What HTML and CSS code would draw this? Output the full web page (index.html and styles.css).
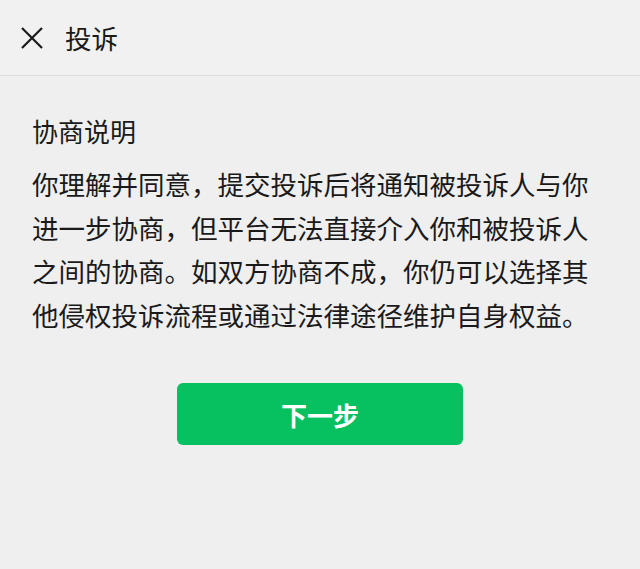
FILE: index.html
```html
<!DOCTYPE html>
<html lang="zh-CN">
<head>
    <meta charset="UTF-8">
    <meta name="viewport" content="width=device-width, initial-scale=1.0">
    <title>投诉</title>
    <link rel="stylesheet" href="styles.css">
</head>
<body>
    <div class="header">
        <span class="close">
            <svg width="22" height="22" viewBox="0 0 22 22">
                <path d="M1 1 L21 21 M21 1 L1 21" stroke="#1a1a1a" stroke-width="2.2" fill="none"/>
            </svg>
        </span>
        <h1>投诉</h1>
    </div>

    <div class="content">
        <h2>协商说明</h2>
        <p>你理解并同意，提交投诉后将通知被投诉人与你进一步协商，但平台无法直接介入你和被投诉人之间的协商。如双方协商不成，你仍可以选择其他侵权投诉流程或通过法律途径维护自身权益。</p>

        <div class="actions">
            <button>下一步</button>
        </div>
    </div>
</body>
</html>
```

FILE: styles.css
```css
:root {
    --bg-color: #efefef;
    --header-bg: #f1f1f1;
    --text-color: #1a1a1a;
    --primary-color: #07c160;
}

body {
    margin: 0;
    padding: 0;
    font-family: 'Noto Sans CJK SC', 'Noto Sans', sans-serif;
    background-color: var(--bg-color);
    color: var(--text-color);
}

.header {
    height: 75px;
    display: flex;
    align-items: center;
    background-color: var(--header-bg);
    border-bottom: 1px solid #dedede;
    padding: 0 21px;
}

.close {
    display: flex;
    width: 22px;
    height: 22px;
    margin-right: 22px;
}

.header h1 {
    margin: 0;
    font-size: 26.5px;
    font-weight: 400;
    line-height: 36px;
}

.content {
    padding: 37px 32px 0;
}

.content h2 {
    margin: 0;
    font-size: 26px;
    font-weight: 400;
    line-height: 36px;
}

.content p {
    margin: 13px 0 0;
    font-size: 26.5px;
    line-height: 43.5px;
}

.actions {
    display: flex;
    justify-content: center;
    margin-top: 47px;
}

button {
    width: 286px;
    height: 62px;
    border: none;
    border-radius: 6px;
    background-color: var(--primary-color);
    color: #fff;
    font-family: inherit;
    font-size: 26px;
    font-weight: 700;
    cursor: pointer;
}
```
